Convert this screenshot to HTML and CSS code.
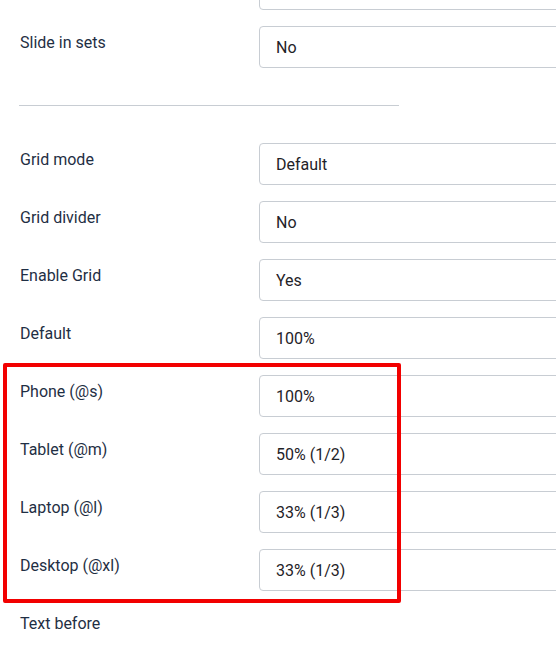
FILE: index.html
```html
<!DOCTYPE html>
<html lang="en">

<head>
  <meta charset="UTF-8">
  <meta name="viewport" content="width=device-width, initial-scale=1.0">
  <title>Grid settings</title>
  <link rel="stylesheet" href="styles.css">
</head>

<body>
  <div class="settings">
    <div class="row">
      <label class="label"></label>
      <div class="field"></div>
    </div>
    <div class="row">
      <label class="label">Slide in sets</label>
      <div class="field">No</div>
    </div>

    <hr class="divider">

    <div class="row">
      <label class="label">Grid mode</label>
      <div class="field">Default</div>
    </div>
    <div class="row">
      <label class="label">Grid divider</label>
      <div class="field">No</div>
    </div>
    <div class="row">
      <label class="label">Enable Grid</label>
      <div class="field">Yes</div>
    </div>
    <div class="row">
      <label class="label">Default</label>
      <div class="field">100%</div>
    </div>

    <div class="breakpoints">
      <div class="row">
        <label class="label">Phone (@s)</label>
        <div class="field">100%</div>
      </div>
      <div class="row">
        <label class="label">Tablet (@m)</label>
        <div class="field">50% (1/2)</div>
      </div>
      <div class="row">
        <label class="label">Laptop (@l)</label>
        <div class="field">33% (1/3)</div>
      </div>
      <div class="row">
        <label class="label">Desktop (@xl)</label>
        <div class="field">33% (1/3)</div>
      </div>
      <div class="highlight"></div>
    </div>

    <div class="row">
      <label class="label">Text before</label>
    </div>
  </div>
</body>

</html>
```

FILE: styles.css
```css
body {
  font-family: 'Roboto', sans-serif;
  font-size: 16px;
  background-color: #ffffff;
  color: #1f2f44;
  margin: 0;
  padding: 0 0 0 20px;
  overflow: hidden;
}

.settings {
  margin-top: -32px;
}

.row {
  display: flex;
  align-items: flex-start;
  margin-bottom: 16px;
}

.label {
  width: 239px;
  flex-shrink: 0;
  padding-top: 7px;
  line-height: 20px;
  color: #1f2f44;
}

.field {
  width: 340px;
  flex-shrink: 0;
  box-sizing: border-box;
  height: 42px;
  padding: 11px 16px 9px;
  line-height: 20px;
  border: 1px solid #c8cdd3;
  border-radius: 4px;
  color: #1f2328;
  background-color: #ffffff;
}

.divider {
  width: 380px;
  margin: 37px 0 37px -1px;
  border: none;
  border-top: 1px solid #c8cdd3;
}

.breakpoints {
  position: relative;
}

/* red annotation frame drawn over the breakpoint rows */
.highlight {
  position: absolute;
  top: -12px;
  left: -17px;
  width: 390px;
  height: 232px;
  border: 4px solid #f20000;
  border-radius: 2px;
}
```
